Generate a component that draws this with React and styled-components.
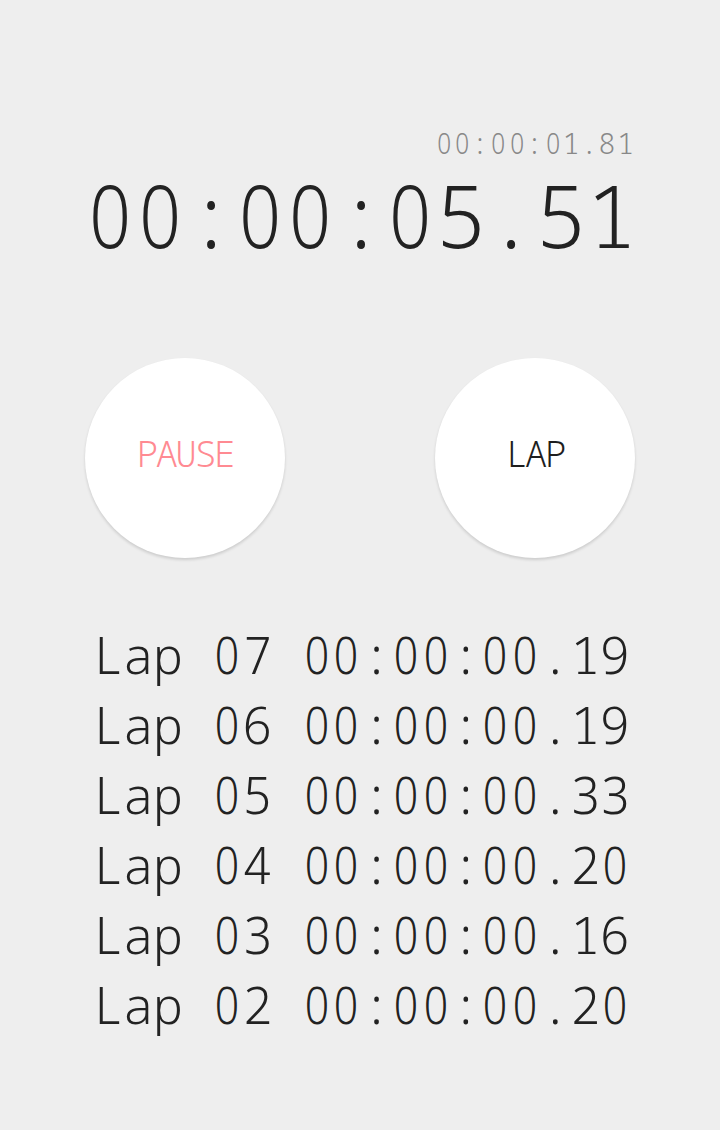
import React from 'react';
import styled, { createGlobalStyle } from 'styled-components';

const GlobalStyle = createGlobalStyle`
  html, body {
    margin: 0;
    padding: 0;
    background: #eeeeee;
  }
  body {
    font-family: 'Noto Sans Mono', 'DejaVu Sans Mono', monospace;
  }
`;

const Page = styled.main`
  width: 550px;
  margin: 0 auto;
  padding-top: 128px;
  display: flex;
  flex-direction: column;
`;

const Display = styled.section`
  display: flex;
  flex-direction: column;
  align-items: flex-end;
`;

/* monospace text whose cell width is set by --cell */
const MonoText = styled.div`
  font-family: 'Noto Sans Mono', 'DejaVu Sans Mono', monospace;
  font-weight: 350;
  letter-spacing: calc(var(--cell) - 0.6em);
  white-space: pre;
`;

/* unslashed, narrow zero drawn with the proportional sibling family */
const Zero = styled.span`
  display: inline-block;
  width: var(--cell);
  letter-spacing: 0;
  font-family: 'Noto Sans', 'DejaVu Sans', sans-serif;
  font-weight: 350;
  text-align: center;
  transform: scaleX(0.84);
`;

const SplitTime = styled(MonoText)`
  --cell: 18.2px;
  font-size: 29px;
  line-height: 1;
  color: #888888;
`;

const MainTime = styled(MonoText)`
  --cell: 50px;
  margin-top: 14px;
  font-size: 87px;
  line-height: 1;
  color: #222222;
`;

const Controls = styled.div`
  margin-top: 100px;
  display: flex;
  justify-content: space-between;
`;

const RoundButton = styled.button`
  --cell: 19.4px;
  width: 200px;
  height: 200px;
  border: none;
  border-radius: 50%;
  background: #ffffff;
  box-shadow: 0 2px 3px rgba(0, 0, 0, 0.14);
  display: flex;
  align-items: center;
  justify-content: center;
  padding: 0 0 8px;
  font-family: 'Noto Sans Mono', 'DejaVu Sans Mono', monospace;
  font-size: 36px;
  line-height: 1;
  font-weight: 300;
  letter-spacing: calc(var(--cell) - 0.6em);
  color: ${p => (p.$tone === 'stop' ? '#ff8a92' : '#1e1e1e')};
  cursor: pointer;
`;

const LapList = styled.ul`
  list-style: none;
  margin: 61px 0 0;
  padding: 0 0 0 8px;
`;

const LapRow = styled(MonoText).attrs({ as: 'li' })`
  --cell: 29.8px;
  font-size: 51px;
  line-height: 70px;
  color: #222222;
`;

function Digits({ text }) {
  return text
    .split(/(0)/)
    .map((part, i) => (part === '0' ? <Zero key={i}>0</Zero> : part));
}

const laps = [
  ['07', '00:00:00.19'],
  ['06', '00:00:00.19'],
  ['05', '00:00:00.33'],
  ['04', '00:00:00.20'],
  ['03', '00:00:00.16'],
  ['02', '00:00:00.20'],
];

export default function App() {
  return (
    <>
      <GlobalStyle />
      <Page>
        <Display>
          <SplitTime>
            <Digits text="00:00:01.81" />
          </SplitTime>
          <MainTime>
            <Digits text="00:00:05.51" />
          </MainTime>
        </Display>
        <Controls>
          <RoundButton $tone="stop">PAUSE</RoundButton>
          <RoundButton>LAP</RoundButton>
        </Controls>
        <LapList>
          {laps.map(([n, t]) => (
            <LapRow key={n}>
              <Digits text={`Lap ${n} ${t}`} />
            </LapRow>
          ))}
        </LapList>
      </Page>
    </>
  );
}
